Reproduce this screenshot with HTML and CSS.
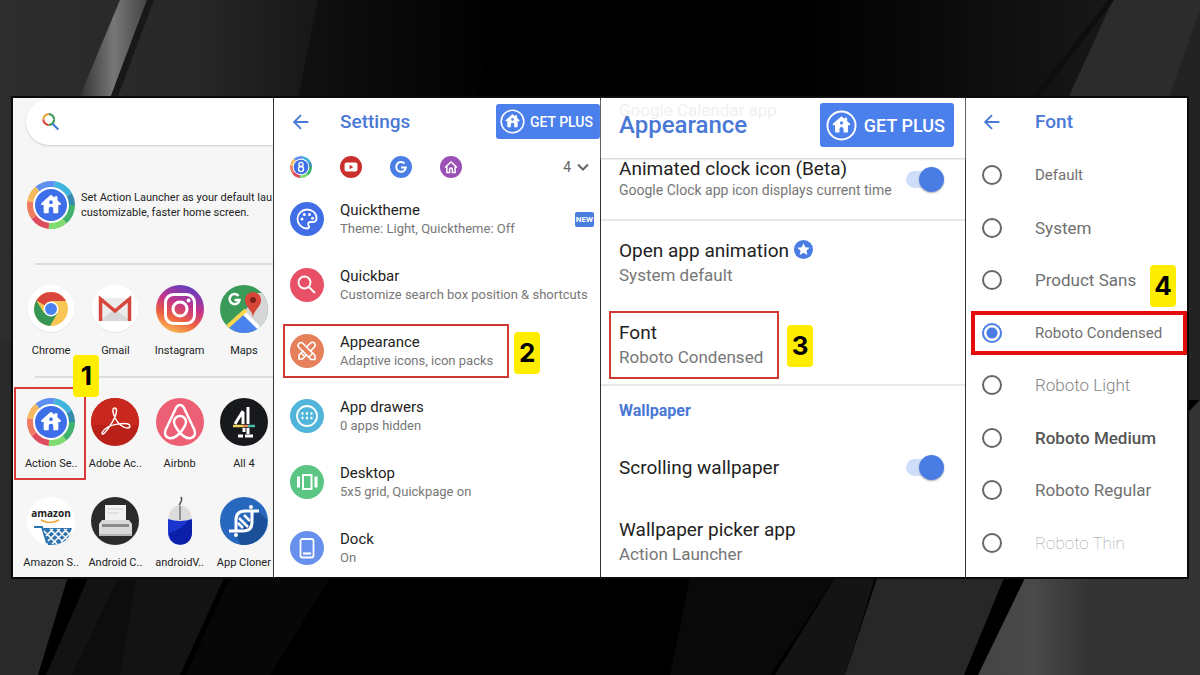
FILE: index.html
```
<!DOCTYPE html>
<html lang="en">

<head>
    <meta charset="UTF-8">
    <meta name="viewport" content="width=device-width, initial-scale=1.0">
    <title>Action Launcher Font</title>
    <link rel="stylesheet" href="styles.css">
</head>

<body>
    <!-- Dark streaks behind the board -->
    <svg class="backdrop" viewBox="0 0 1200 675" preserveAspectRatio="none" aria-hidden="true">
        <defs>
            <linearGradient id="leftTop"><stop offset="0" stop-color="#2d2d2d"/><stop offset=".6" stop-color="#272727"/><stop offset="1" stop-color="#151515"/></linearGradient>
            <linearGradient id="shine"><stop offset="0" stop-color="#333"/><stop offset=".5" stop-color="#777"/><stop offset="1" stop-color="#444"/></linearGradient>
            <linearGradient id="fadeOut"><stop offset="0" stop-color="#151515"/><stop offset="1" stop-color="#000"/></linearGradient>
            <linearGradient id="fadeIn"><stop offset="0" stop-color="#000"/><stop offset="1" stop-color="#181818"/></linearGradient>
            <linearGradient id="rightLow"><stop offset="0" stop-color="#444"/><stop offset=".25" stop-color="#4a4a4a"/><stop offset=".5" stop-color="#333"/><stop offset="1" stop-color="#333"/></linearGradient>
        </defs>
        <rect width="1200" height="675" fill="#000"/>
        <path d="M0 0H330L260 340H0Z" fill="url(#leftTop)"/>
        <path d="M318 0H500L420 340H248Z" fill="url(#fadeOut)"/>
        <path d="M120 0H147L111 96H80Z" fill="url(#shine)"/>
        <path d="M147 0H154L118 96H111Z" fill="#181818"/>
        <path d="M800 0H1113L1020 300H800Z" fill="url(#fadeIn)"/>
        <path d="M1113 0H1200V400H930Z" fill="#2c2c2c"/>
        <path d="M1200 10V400H1060Z" fill="#232323"/>
        <path d="M1108 0H1114L1040 97H1032Z" fill="#0e0e0e"/>
        <path d="M0 340H140L38 675H0Z" fill="#292929"/>
        <path d="M88 578H224L180 675H46Z" fill="#131313"/>
        <path d="M118 578H136L120 675H72Z" fill="#0d0d0d"/>
        <path d="M230 578H330L270 675H186Z" fill="#070707"/>
        <path d="M690 578H835L770 675H670Z" fill="#090909"/>
        <path d="M835 578H875L845 675H775Z" fill="#141414"/>
        <path d="M877 578H1004L964 675H845Z" fill="#272727"/>
        <path d="M1025 578L1200 400V675H978Z" fill="url(#rightLow)"/>
    </svg>

    <!-- Shared shapes -->
    <svg class="sprite" aria-hidden="true">
        <symbol id="house" viewBox="0 0 24 24">
            <path fill="currentColor" fill-rule="evenodd" d="M11.2 2.4q.8-.7 1.6 0L16 5.200V3.600h3v4.300l3.600 3.200q1 1.400-.6 1.900H20v8q0 1-1 1h-4.500v-4.500a2.500 2.500 0 0 0-5 0V22H5q-1 0-1-1v-8H2q-1.600-.5-.6-1.900ZM12 8a2 2 0 1 0 0 4 2 2 0 0 0 0-4Z"/>
        </symbol>
        <symbol id="ring" viewBox="0 0 48 48">
            <circle cx="24" cy="24" r="22" fill="#fff"/>
            <g fill="none" stroke-width="6" transform="rotate(-90 24 24)">
                <circle cx="24" cy="24" r="21" stroke="#3fb4dc" pathLength="360" stroke-dasharray="50 310" stroke-dashoffset="-10"/>
                <circle cx="24" cy="24" r="21" stroke="#348bab" pathLength="360" stroke-dasharray="30 330" stroke-dashoffset="-60"/>
                <circle cx="24" cy="24" r="21" stroke="#41b26e" pathLength="360" stroke-dasharray="50 310" stroke-dashoffset="-90"/>
                <circle cx="24" cy="24" r="21" stroke="#80dc70" pathLength="360" stroke-dasharray="46 314" stroke-dashoffset="-140"/>
                <circle cx="24" cy="24" r="21" stroke="#de4c5f" pathLength="360" stroke-dasharray="48 312" stroke-dashoffset="-186"/>
                <circle cx="24" cy="24" r="21" stroke="#ee7a60" pathLength="360" stroke-dasharray="46 314" stroke-dashoffset="-234"/>
                <circle cx="24" cy="24" r="21" stroke="#f3ba60" pathLength="360" stroke-dasharray="40 320" stroke-dashoffset="-280"/>
                <circle cx="24" cy="24" r="21" stroke="#5d90f0" pathLength="360" stroke-dasharray="50 310" stroke-dashoffset="-320"/>
            </g>
            <circle cx="24" cy="24" r="16" fill="#3e6fe8"/>
        </symbol>
        <symbol id="back" viewBox="0 0 24 24">
            <path d="M20 12H5M12 4.500 4.500 12l7.500 7.500" fill="none" stroke="currentColor" stroke-width="2"/>
        </symbol>
        <symbol id="plus" viewBox="0 0 32 32">
            <circle cx="16" cy="16" r="14.500" fill="none" stroke="#fff" stroke-width="2"/>
            <use href="#house" x="6" y="5" width="20" height="20" color="#fff"/>
        </symbol>
    </svg>

    <main class="board">
        <!-- Home screen -->
        <section class="panel home">
            <label class="search">
                <svg viewBox="0 0 24 24" fill="none" stroke-width="2.500">
                    <path d="M4 9a6.500 6.500 0 0 1 6.500-6.500" stroke="#e8a33a"/>
                    <path d="M10.500 2.500A6.500 6.500 0 0 1 17 9" stroke="#3c9a55"/>
                    <path d="M17 9a6.500 6.500 0 0 1-6.500 6.500" stroke="#3c9a55"/>
                    <path d="M10.500 15.500A6.500 6.500 0 0 1 4 9" stroke="#d9473c"/>
                    <path d="m15 14 7 7" stroke="#3f78d8"/>
                </svg>
                <input type="text" aria-label="Search">
            </label>

            <div class="promo">
                <svg class="app-icon" viewBox="0 0 48 48"><use href="#ring"/><use href="#house" x="13" y="12" width="22" height="22" color="#fff"/></svg>
                <p>Set Action Launcher as your default lau<br>customizable, faster home screen.</p>
            </div>

            <div class="apps top-apps">
                <a class="app" href="#">
                    <svg class="app-icon" viewBox="0 0 48 48">
                        <circle cx="24" cy="24.500" r="23.500" fill="#e6e6e6"/><circle cx="24" cy="23.500" r="23.500" fill="#fff"/>
                        <circle cx="24" cy="24" r="17" fill="#f7c654"/>
                        <path d="M24 24 9.300 15.500A17 17 0 0 1 38.700 15.500V16H24Z" fill="#d9473c"/>
                        <path d="M9.300 15.500A17 17 0 0 0 23 41l7.500-13L24 24l-7 4Z" fill="#359655"/>
                        <circle cx="24" cy="24" r="7.500" fill="#fff"/><circle cx="24" cy="24" r="6" fill="#4b83ee"/>
                    </svg>
                    <span>Chrome</span>
                </a>
                <a class="app" href="#">
                    <svg class="app-icon" viewBox="0 0 48 48">
                        <circle cx="24" cy="24.500" r="23.500" fill="#e6e6e6"/><circle cx="24" cy="23.500" r="23.500" fill="#fff"/>
                        <path d="M9 13h30v23H9Z" fill="#ececec"/><path d="m9 36 15-12 15 12Z" fill="#d8d8d8"/>
                        <path d="M9.500 36V14L24 26 38.500 14v22" fill="none" stroke="#d5473c" stroke-width="3.500"/>
                    </svg>
                    <span>Gmail</span>
                </a>
                <a class="app" href="#">
                    <svg class="app-icon" viewBox="0 0 48 48">
                        <defs>
                            <linearGradient id="insta" x1=".3" y1="1" x2=".7" y2="0"><stop offset="0" stop-color="#f8bd55"/><stop offset=".3" stop-color="#ee6040"/><stop offset=".6" stop-color="#c4348a"/><stop offset="1" stop-color="#5b3fc4"/></linearGradient>
                        </defs>
                        <circle cx="24" cy="24" r="24" fill="url(#insta)"/>
                        <g fill="none" stroke="#fff" stroke-width="3"><rect x="9.500" y="9.500" width="29" height="29" rx="8"/><circle cx="24" cy="24" r="7"/></g>
                        <circle cx="32.500" cy="15.500" r="2" fill="#fff"/>
                    </svg>
                    <span>Instagram</span>
                </a>
                <a class="app" href="#">
                    <svg class="app-icon" viewBox="0 0 48 48">
                        <defs><clipPath id="disc"><circle cx="24" cy="24" r="24"/></clipPath></defs>
                        <g clip-path="url(#disc)">
                            <path d="M0 0h48v48H0Z" fill="#3a9a57"/>
                            <path d="M24 28 36 8h12v40Z" fill="#d6d6d6"/>
                            <path d="M24 28 8 44v4h34Z" fill="#4b83ee"/>
                            <path d="M24 28 44 48" stroke="#fff" stroke-width="4"/>
                            <path d="M26 25 6 43" stroke="#f8d650" stroke-width="4"/>
                        </g>
                        <path d="M33 33c0-8-8-10-8-18a8 8 0 0 1 16 0c0 8-8 10-8 18Z" fill="#d8463a"/><circle cx="33" cy="15" r="3" fill="#7c221c"/>
                        <path d="M18.500 11A5 5 0 1 0 19.500 15H14.500" fill="none" stroke="#fff" stroke-width="2.500"/>
                    </svg>
                    <span>Maps</span>
                </a>
            </div>

            <div class="apps all-apps">
                <a class="app" href="#">
                    <svg class="app-icon" viewBox="0 0 48 48"><use href="#ring"/><use href="#house" x="13" y="12" width="22" height="22" color="#fff"/></svg>
                    <span>Action Se..</span>
                    <b class="step step-one">1</b>
                </a>
                <a class="app" href="#">
                    <svg class="app-icon" viewBox="0 0 48 48">
                        <circle cx="24" cy="24" r="24" fill="#b92018"/><path d="M0 24a24 24 0 0 1 48 0v3H0Z" fill="#c9281e"/>
                        <path d="M23.500 10c-4 0 0 12 6 17 5 4 11 4 9 0-2-3-18-1-23 3-6 4-5 8-2 5 5-5 12-17 12-22 0-2-1-3-2-3Z" fill="none" stroke="#fff" stroke-width="1.500"/>
                    </svg>
                    <span>Adobe Ac..</span>
                </a>
                <a class="app" href="#">
                    <svg class="app-icon" viewBox="0 0 48 48">
                        <circle cx="24" cy="24" r="24" fill="#ed5f74"/>
                        <path d="M24 35c-4-5-6-8-6-11a6 6 0 0 1 12 0c0 3-2 6-6 11-4 4-8 6-11 5-4-1-5-5-3-9L20 10c2-4 6-4 8 0l10 21c2 4 1 8-3 9-3 1-7-1-11-5Z" fill="none" stroke="#fff" stroke-width="2.500"/>
                    </svg>
                    <span>Airbnb</span>
                </a>
                <a class="app" href="#">
                    <svg class="app-icon" viewBox="0 0 48 48">
                        <circle cx="24" cy="24" r="24" fill="#17191d"/>
                        <g fill="none" stroke="#fff" stroke-width="3"><path d="m23 13-8 13M23 14v12M28 9v17M28 30v6M24 30v4M18 38h5M25 38h8"/></g>
                        <path d="M13 28h11" stroke="#ecd75a" stroke-width="2.500"/><path d="M23 28h6" stroke="#e78a60" stroke-width="2.500"/><path d="M28 28h7" stroke="#45bfa4" stroke-width="2.500"/>
                    </svg>
                    <span>All 4</span>
                </a>
                <a class="app" href="#">
                    <svg class="app-icon" viewBox="0 0 48 48">
                        <circle cx="24" cy="24" r="24" fill="#fff"/>
                        <text class="amazon" x="24" y="20" text-anchor="middle">amazon</text>
                        <path d="M14 23q9 5 18 0" fill="none" stroke="#eda73d" stroke-width="1.500"/>
                        <path d="M7 30h8l5 16" fill="none" stroke="#2d74ae" stroke-width="2"/>
                        <path d="M16 31h29l-4 10q-6 7-17 7h-3Z" fill="#2d74ae"/>
                        <path d="m17 34 13 13M23 32l13 13M30 32l10 10M37 32l5 5M26 32l-7 7M33 32 21 44M40 32 25 47M43 36l-9 9" stroke="#fff" stroke-width="1.500"/>
                    </svg>
                    <span>Amazon S..</span>
                </a>
                <a class="app" href="#">
                    <svg class="app-icon" viewBox="0 0 48 48">
                        <circle cx="24" cy="24" r="24" fill="#2b2b2b"/>
                        <path d="M14 8h21v18H14Z" fill="#f1f1f1"/><path d="M17 12h15M17 16h11" stroke="#cfcfcf" stroke-width="1"/>
                        <path d="M11 23h27l3 4v12H8V27Z" fill="#d9d9d9"/><path d="M11 27h27v3H11Z" fill="#8b8b8b"/><path d="M8 37h33v2H8Z" fill="#b5b5b5"/>
                    </svg>
                    <span>Android C..</span>
                </a>
                <a class="app" href="#">
                    <svg class="app-icon" viewBox="0 0 48 48">
                        <path d="M24 10c-3-3 4-5 1-10" fill="none" stroke="#555" stroke-width="1.500"/>
                        <path d="M12 24C12 3 36 3 36 24Z" fill="#dcdcdc"/><path d="M12 22q12 4 24 0v13c0 17-24 17-24 0Z" fill="#1a35cf"/>
                        <path d="M13 36q12-3 20-13h3v12c0 17-22 16-23 1Z" fill="#0c1fa8"/>
                        <path d="M24 9v14" stroke="#777" stroke-width="1.500"/>
                    </svg>
                    <span>androidV..</span>
                </a>
                <a class="app" href="#">
                    <svg class="app-icon" viewBox="0 0 48 48">
                        <circle cx="24" cy="24" r="24" fill="#2767bd"/>
                        <path d="M38 14 47 23a24 24 0 0 1-26 25l-5-10Z" fill="#1b4f98"/>
                        <g fill="none" stroke="#fff" stroke-width="3">
                            <path d="M9 34h14q9 0 9-9V14M16 34V23q0-9 9-9h14"/>
                            <path d="m19 21 9 9M24 18l6 6M18 26l5 5" stroke-width="2.500"/>
                        </g>
                        <circle cx="31" cy="10" r="2" fill="#fff"/><circle cx="16" cy="38" r="2" fill="#fff"/>
                    </svg>
                    <span>App Cloner</span>
                </a>
            </div>
        </section>

        <!-- Settings -->
        <section class="panel settings">
            <header class="bar">
                <button class="back" type="button" aria-label="Back"><svg viewBox="0 0 24 24"><use href="#back"/></svg></button>
                <h2>Settings</h2>
                <button class="get-plus" type="button"><svg viewBox="0 0 32 32"><use href="#plus"/></svg>GET PLUS</button>
            </header>
            <div class="shortcuts">
                <svg viewBox="0 0 48 48"><use href="#ring"/><circle cx="24" cy="18.500" r="4.500" fill="none" stroke="#fff" stroke-width="3"/><circle cx="24" cy="28.500" r="5.500" fill="none" stroke="#fff" stroke-width="3"/></svg>
                <svg viewBox="0 0 24 24"><circle cx="12" cy="12" r="12" fill="#c9302c"/><rect x="5" y="7" width="14" height="10" rx="2" fill="#fff"/><path d="m10.500 9.500 4 2.500-4 2.500Z" fill="#c9302c"/></svg>
                <svg viewBox="0 0 24 24"><circle cx="12" cy="12" r="12" fill="#4a7fe6"/><path d="M15.800 8.200A5.300 5.300 0 1 0 17.300 12.500H12" fill="none" stroke="#fff" stroke-width="2.200"/></svg>
                <svg viewBox="0 0 24 24"><circle cx="12" cy="12" r="12" fill="#9a50b4"/><path d="m5.500 12.500 6.500-6 6.500 6M7.500 11.500V18H10.500v-3.500a1.500 1.500 0 0 1 3 0V18h3v-6.500" fill="none" stroke="#fff" stroke-width="1.600"/></svg>
                <button class="count" type="button">4 <svg viewBox="0 0 12 12"><path d="m1 3.500 5 5 5-5" fill="none" stroke="currentColor" stroke-width="2"/></svg></button>
            </div>
            <nav class="items">
                <a class="item" href="#">
                    <svg class="item-icon" viewBox="0 0 34 34">
                        <circle cx="17" cy="17" r="17" fill="#416ee6"/>
                        <path d="M17 7.500a9.500 9.500 0 1 0 0 19c2.500 0 2.500-2 1.500-3-1-2 0-3.500 2-3.500h2.500c2.500 0 3.500-2 3.500-4 0-5-4.500-8.500-9.500-8.500Z" fill="none" stroke="#fff" stroke-width="1.800"/>
                        <g fill="#fff"><circle cx="12" cy="17" r="1.500"/><circle cx="14.300" cy="12.500" r="1.500"/><circle cx="19.500" cy="12.500" r="1.500"/><circle cx="22.500" cy="16.300" r="1.500"/></g>
                    </svg>
                    <span class="item-text"><strong>Quicktheme</strong><small>Theme: Light, Quicktheme: Off</small></span>
                    <em class="new">NEW</em>
                </a>
                <a class="item" href="#">
                    <svg class="item-icon" viewBox="0 0 34 34"><circle cx="17" cy="17" r="17" fill="#e75065"/><circle cx="14.500" cy="14.500" r="6" fill="none" stroke="#fff" stroke-width="1.800"/><path d="m19 19 6 6" stroke="#fff" stroke-width="2"/></svg>
                    <span class="item-text"><strong>Quickbar</strong><small>Customize search box position &amp; shortcuts</small></span>
                </a>
                <a class="item marked" href="#">
                    <svg class="item-icon" viewBox="0 0 34 34">
                        <circle cx="17" cy="17" r="17" fill="#e5805a"/>
                        <g fill="none" stroke="#fff" stroke-width="1.600">
                            <path d="M9 9.500q2-2 4 0l12 12v4h-4L9 13.500q-2-2 0-4ZM19 23l4.500-4.500"/>
                            <path d="m16 13.500 4.500-4.500q2-1.500 4 0 1.500 2 0 4L20 17.500M17 20.500l-4.500 4.500H9v-4l4.500-4.500M11 19l4 4"/>
                        </g>
                    </svg>
                    <span class="item-text"><strong>Appearance</strong><small>Adaptive icons, icon packs</small></span>
                    <b class="step step-two">2</b>
                </a>
                <a class="item" href="#">
                    <svg class="item-icon" viewBox="0 0 34 34">
                        <circle cx="17" cy="17" r="17" fill="#51b4da"/><circle cx="17" cy="17" r="10" fill="none" stroke="#fff" stroke-width="1.800"/>
                        <path d="M11.500 14.500h2M16 14.500h2M20.500 14.500h2M11.500 19h2M16 19h2M20.500 19h2" stroke="#fff" stroke-width="2.400"/>
                    </svg>
                    <span class="item-text"><strong>App drawers</strong><small>0 apps hidden</small></span>
                </a>
                <a class="item" href="#">
                    <svg class="item-icon" viewBox="0 0 34 34"><circle cx="17" cy="17" r="17" fill="#5bc683"/><rect x="13" y="10" width="8.500" height="14" fill="none" stroke="#fff" stroke-width="2"/><path d="M8.500 11.500v11M26 11.500v11" stroke="#fff" stroke-width="3"/></svg>
                    <span class="item-text"><strong>Desktop</strong><small>5x5 grid, Quickpage on</small></span>
                </a>
                <a class="item" href="#">
                    <svg class="item-icon" viewBox="0 0 34 34"><circle cx="17" cy="17" r="17" fill="#6791ec"/><rect x="10.500" y="8" width="13" height="18.500" rx="2" fill="none" stroke="#fff" stroke-width="1.800"/><path d="M13 22.500h8" stroke="#fff" stroke-width="2.200"/></svg>
                    <span class="item-text"><strong>Dock</strong><small>On</small></span>
                </a>
            </nav>
        </section>

        <!-- Appearance -->
        <section class="panel appearance">
            <header class="bar">
                <span class="ghost">Google Calendar app</span>
                <h2>Appearance</h2>
                <button class="get-plus" type="button"><svg viewBox="0 0 32 32"><use href="#plus"/></svg>GET PLUS</button>
            </header>
            <label class="option clock">
                <span class="option-text"><strong>Animated clock icon (Beta)</strong><small>Google Clock app icon displays current time</small></span>
                <input class="switch" type="checkbox" checked>
            </label>
            <a class="option" href="#">
                <span class="option-text">
                    <strong>Open app animation <svg class="star" viewBox="0 0 20 20"><circle cx="10" cy="10" r="10" fill="#4a7de4"/><path d="m10 3.500 1.900 4.200 4.600.5-3.400 3.100 1 4.500L10 13.500l-4.100 2.300 1-4.500-3.400-3.100 4.600-.5Z" fill="#fff"/></svg></strong>
                    <small>System default</small>
                </span>
            </a>
            <a class="option marked" href="#">
                <span class="option-text"><strong>Font</strong><small>Roboto Condensed</small></span>
                <b class="step step-three">3</b>
            </a>
            <h3>Wallpaper</h3>
            <label class="option scrolling">
                <span class="option-text"><strong>Scrolling wallpaper</strong></span>
                <input class="switch" type="checkbox" checked>
            </label>
            <a class="option picker" href="#">
                <span class="option-text"><strong>Wallpaper picker app</strong><small>Action Launcher</small></span>
            </a>
        </section>

        <!-- Font list -->
        <section class="panel fonts">
            <header class="bar">
                <button class="back" type="button" aria-label="Back"><svg viewBox="0 0 24 24"><use href="#back"/></svg></button>
                <h2>Font</h2>
            </header>
            <div class="choices">
                <label class="choice narrow"><input type="radio" name="font">Default</label>
                <label class="choice"><input type="radio" name="font">System</label>
                <label class="choice"><input type="radio" name="font">Product Sans</label>
                <label class="choice narrow marked"><input type="radio" name="font" checked>Roboto Condensed<b class="step step-four">4</b></label>
                <label class="choice light"><input type="radio" name="font">Roboto Light</label>
                <label class="choice medium"><input type="radio" name="font">Roboto Medium</label>
                <label class="choice"><input type="radio" name="font">Roboto Regular</label>
                <label class="choice thin"><input type="radio" name="font">Roboto Thin</label>
            </div>
        </section>
    </main>
</body>

</html>
```
FILE: styles.css
```
* {
    box-sizing: border-box;
}

body {
    margin: 0;
    padding: 96px 11px;
    height: 100vh;
    min-height: 675px;
    display: flex;
    background: #000;
    color: #222;
    font-family: Roboto, Arial, sans-serif;
}

a {
    color: inherit;
    text-decoration: none;
}

button {
    border: none;
    padding: 0;
    background: none;
    font-family: inherit;
    cursor: pointer;
}

h2,
h3,
p {
    margin: 0;
}

strong,
small,
em {
    font-weight: 400;
    font-style: normal;
}

.backdrop {
    position: absolute;
    top: 0;
    left: 0;
    width: 100%;
    height: 100%;
    z-index: -1;
}

.sprite {
    position: absolute;
    width: 0;
    height: 0;
}

.board {
    flex: 1;
    display: grid;
    grid-template-columns: 260fr 326fr 364fr 221fr;
    gap: 1px;
    border: 2px solid #0a0a0a;
    background: #333;
}

.panel {
    display: flex;
    flex-direction: column;
    min-width: 0;
    background: #fff;
}

.bar {
    display: flex;
    align-items: center;
    color: #4a78d6;
}

.bar h2 {
    font-weight: 500;
    font-size: 19px;
}

/* Numbered steps and red frames */
.step {
    position: absolute;
    width: 26px;
    height: 42px;
    border-radius: 4px;
    background: #ffed00;
    color: #000;
    font: 700 26px/42px Inter, sans-serif;
    text-align: center;
}

.marked {
    position: relative;
    border: 2px solid #cf3a32;
}

/* Home screen */
.home {
    background: #f6f6f6;
    overflow: hidden;
}

.search {
    display: flex;
    align-items: center;
    gap: 12px;
    height: 46px;
    margin: 1px 0 0 13px;
    padding-left: 13px;
    border-radius: 23px 0 0 23px;
    background: #fff;
    box-shadow: 0 1px 2px #ccc;
}

.search svg {
    width: 22px;
    height: 20px;
}

.search input {
    flex: 1;
    min-width: 0;
    border: none;
    outline: none;
    background: none;
}

.promo {
    display: flex;
    align-items: center;
    gap: 6px;
    margin: 36px 0 34px;
    padding-left: 14px;
}

.promo p {
    font-size: 11px;
    line-height: 15px;
    white-space: nowrap;
}

.app-icon {
    flex: none;
    width: 48px;
    height: 48px;
    overflow: visible;
}

.apps {
    display: grid;
    grid-template-columns: repeat(4, 1fr);
    margin-right: -3px;
    padding-left: 6px;
    background: linear-gradient(#ddd, #ddd) 22px 0 / 100% 2px no-repeat;
}

.top-apps {
    padding-top: 22px;
    padding-bottom: 17px;
}

.all-apps {
    row-gap: 25px;
    padding-top: 22px;
}

.app {
    position: relative;
    display: flex;
    flex-direction: column;
    align-items: center;
    gap: 10px;
    font-size: 11px;
    line-height: 16px;
    white-space: nowrap;
}

.all-apps .app:first-child {
    align-self: start;
    margin: -11px -3px -8px -5px;
    padding: 9px 0 6px 2px;
    border: 2px solid #dc3c38;
}

.step-one {
    top: -34px;
    right: -15px;
}

.amazon {
    font: 700 10px "Open Sans", sans-serif;
    fill: #222;
}

/* Settings */
.settings {
    padding-left: 16px;
}

.settings .bar {
    margin-top: 6px;
    height: 35px;
}

.back {
    width: 22px;
    height: 22px;
    color: #4a78d6;
}

.back svg {
    display: block;
    width: 22px;
    height: 22px;
}

.settings h2 {
    margin-left: 28px;
}

.get-plus {
    display: flex;
    align-items: center;
    gap: 5px;
    height: 35px;
    margin-left: auto;
    padding: 0 7px 0 4px;
    border-radius: 3px;
    background: #4a7fec;
    color: #fff;
    font-size: 14px;
    font-weight: 500;
}

.get-plus svg {
    width: 25px;
    height: 25px;
}

.shortcuts {
    display: flex;
    align-items: center;
    gap: 28px;
    height: 22px;
    margin: 17px 11px 21px 0;
}

.shortcuts > svg {
    width: 22px;
    height: 22px;
}

.count {
    display: flex;
    align-items: center;
    gap: 6px;
    margin-left: auto;
    color: #666;
    font-size: 14px;
}

.count svg {
    width: 12px;
    height: 12px;
}

.items {
    flex: 1;
    display: flex;
    flex-direction: column;
    justify-content: space-between;
    padding-bottom: 9px;
}

.item {
    display: flex;
    align-items: center;
    gap: 16px;
    height: 40px;
    padding-right: 6px;
}

.item-icon {
    flex: none;
    width: 34px;
    height: 34px;
}

.item-text,
.option-text {
    display: flex;
    flex-direction: column;
}

.item strong {
    font-size: 15px;
    line-height: 20px;
}

.item small {
    color: #777;
    font-size: 13px;
    line-height: 18px;
    white-space: nowrap;
}

.new {
    margin-left: auto;
    padding: 0 1px;
    border-radius: 2px;
    background: #4a7de0;
    color: #fff;
    font-size: 8px;
    font-weight: 700;
    line-height: 15px;
}

.item.marked {
    align-self: flex-start;
    height: 54px;
    margin: -7px 0 -7px -7px;
    padding: 0 14px 0 5px;
}

.step-two {
    top: 6px;
    right: -33px;
}

/* Appearance */
.appearance .bar {
    position: relative;
    height: 60px;
    padding: 0 11px 6px 18px;
    box-shadow: 0 1px 2px #ccc;
}

.appearance h2 {
    font-size: 24px;
}

.ghost {
    position: absolute;
    top: 2px;
    left: 18px;
    color: #f0f0f0;
    font-size: 17px;
}

.appearance .get-plus {
    height: 44px;
    gap: 7px;
    padding: 0 9px 0 6px;
    font-size: 18px;
}

.appearance .get-plus svg {
    width: 31px;
    height: 31px;
}

.option {
    display: flex;
    align-items: center;
    justify-content: space-between;
    padding: 0 21px 0 18px;
}

.option strong {
    font-size: 19px;
    line-height: 24px;
}

.option small {
    color: #777;
    font-size: 17px;
    line-height: 24px;
}

.clock {
    margin-bottom: 18px;
    padding-bottom: 19px;
    border-bottom: 2px solid #e8e8e8;
}

.clock strong {
    line-height: 22px;
}

.clock small {
    font-size: 14px;
    line-height: 20px;
    white-space: nowrap;
}

.clock .switch {
    flex: none;
    margin-left: -30px;
}

.star {
    width: 19px;
    height: 19px;
    vertical-align: -2px;
}

.option.marked {
    align-self: flex-start;
    margin: 24px 0 5px 8px;
    padding: 8px 14px 8px 8px;
}

.step-three {
    top: 12px;
    right: -36px;
}

.appearance h3 {
    padding: 15px 18px 0;
    border-top: 2px solid #e8e8e8;
    color: #4a78d6;
    font-size: 16px;
    font-weight: 700;
    line-height: 20px;
}

.scrolling {
    margin-top: 34px;
}

.picker {
    margin-top: 38px;
}

.switch {
    appearance: none;
    display: flex;
    align-items: center;
    margin: 0;
}

.switch::before {
    content: "";
    width: 26px;
    height: 17px;
    border-radius: 9px 0 0 9px;
    background: #cfdef8;
}

.switch::after {
    content: "";
    width: 25px;
    height: 25px;
    margin-left: -13px;
    border-radius: 50%;
    background: #4a7de4;
    box-shadow: 0 1px 2px #aaa;
}

/* Font list */
.fonts .bar {
    margin-top: 12px;
    padding-left: 15px;
}

.fonts h2 {
    margin-left: 32px;
}

.choices {
    flex: 1;
    display: flex;
    flex-direction: column;
    justify-content: space-between;
    padding: 30px 0 22px;
}

.choice {
    display: flex;
    align-items: center;
    gap: 33px;
    height: 24px;
    padding-left: 16px;
    color: #707070;
    font-size: 17px;
    white-space: nowrap;
}

.choice input {
    appearance: none;
    flex: none;
    width: 20px;
    height: 20px;
    margin: 0;
    border: 2px solid #666;
    border-radius: 50%;
}

.choice input:checked {
    border-color: #4a7de4;
    background: radial-gradient(#4a7de4 5px, #fff 6px);
}

.choice.narrow {
    font-size: 15px;
}

.choice.light {
    color: #858585;
    font-weight: 300;
}

.choice.medium {
    color: #555;
    font-weight: 500;
}

.choice.thin {
    color: #999;
    font-weight: 100;
}

.choice.marked {
    height: 44px;
    margin: -10px 0 -10px 5px;
    padding-left: 7px;
    border: 4px solid #e60c0c;
}

.step-four {
    top: -50px;
    right: 7px;
}
```
